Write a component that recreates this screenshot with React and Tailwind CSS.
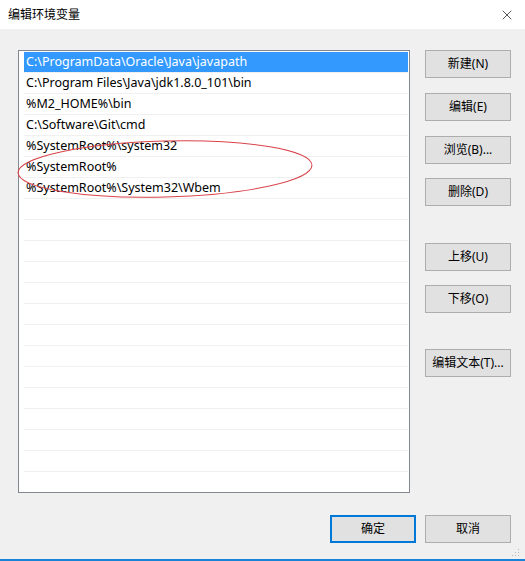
import { X } from "lucide-react";

const paths = [
  "C:\\ProgramData\\Oracle\\Java\\javapath",
  "C:\\Program Files\\Java\\jdk1.8.0_101\\bin",
  "%M2_HOME%\\bin",
  "C:\\Software\\Git\\cmd",
  "%SystemRoot%\\system32",
  "%SystemRoot%",
  "%SystemRoot%\\System32\\Wbem",
];

const rows = Array.from({ length: 21 }, (_, i) => paths[i] || "");

function Btn({ children, className = "", primary = false }) {
  return (
    <button
      type="button"
      className={`flex h-[28px] w-[86px] items-center justify-center bg-[#e1e1e1] text-[12px] text-black ${
        primary ? "border-2 border-[#0078d7]" : "border border-[#adadad]"
      } ${className}`}
    >
      {children}
    </button>
  );
}

export default function App() {
  return (
    <div
      className="relative flex h-[561px] w-[525px] flex-col overflow-hidden bg-[#f0f0f0] border-b-2 border-[#1883d7]"
      style={{ fontFamily: '"Noto Sans", "Noto Sans CJK SC", sans-serif' }}
    >
      <div className="flex h-[29px] items-center justify-between bg-white pl-[8px] pr-[10px]">
        <span className="text-[12px] text-black">编辑环境变量</span>
        <X size={16} strokeWidth={1} className="text-black" />
      </div>

      <div className="flex pt-[21px]">
        <div className="ml-[18px] h-[443px] w-[392px] overflow-hidden border border-[#828790] bg-white pl-[5px] pr-[1px] pt-[1px]">
          {rows.map((p, i) => (
            <div
              key={i}
              className={`flex h-[21px] items-center border-b border-[#f0f0f0] pl-[2px] pt-[1px] text-[12.5px] leading-none ${
                i === 0 ? "bg-[#3399ff] text-white" : "text-black"
              }`}
            >
              {p}
            </div>
          ))}
        </div>

        <div className="ml-[15px] flex flex-col">
          <Btn>新建(N)</Btn>
          <Btn className="mt-[15px]">编辑(E)</Btn>
          <Btn className="mt-[15px]">浏览(B)...</Btn>
          <Btn className="mt-[14px]">删除(D)</Btn>
          <Btn className="mt-[37px]">上移(U)</Btn>
          <Btn className="mt-[14px]">下移(O)</Btn>
          <Btn className="mt-[36px]">编辑文本(T)...</Btn>
        </div>
      </div>

      <div className="mt-[22px] flex justify-end gap-[9px] pr-[14px]">
        <Btn primary className="h-[27px]">确定</Btn>
        <Btn className="h-[27px]">取消</Btn>
      </div>

      <svg
        className="pointer-events-none absolute left-0 top-0"
        width="525"
        height="561"
        viewBox="0 0 525 561"
      >
        <ellipse
          cx="165"
          cy="169"
          rx="147"
          ry="28"
          transform="rotate(-1.5 165 169)"
          fill="none"
          stroke="#d9434a"
          strokeWidth="1"
        />
        <g fill="#b9b9b9">
          <rect x="518" y="549" width="1" height="1" />
          <rect x="515" y="552" width="1" height="1" />
          <rect x="518" y="552" width="1" height="1" />
          <rect x="512" y="555" width="1" height="1" />
          <rect x="515" y="555" width="1" height="1" />
          <rect x="518" y="555" width="1" height="1" />
        </g>
      </svg>
    </div>
  );
}
